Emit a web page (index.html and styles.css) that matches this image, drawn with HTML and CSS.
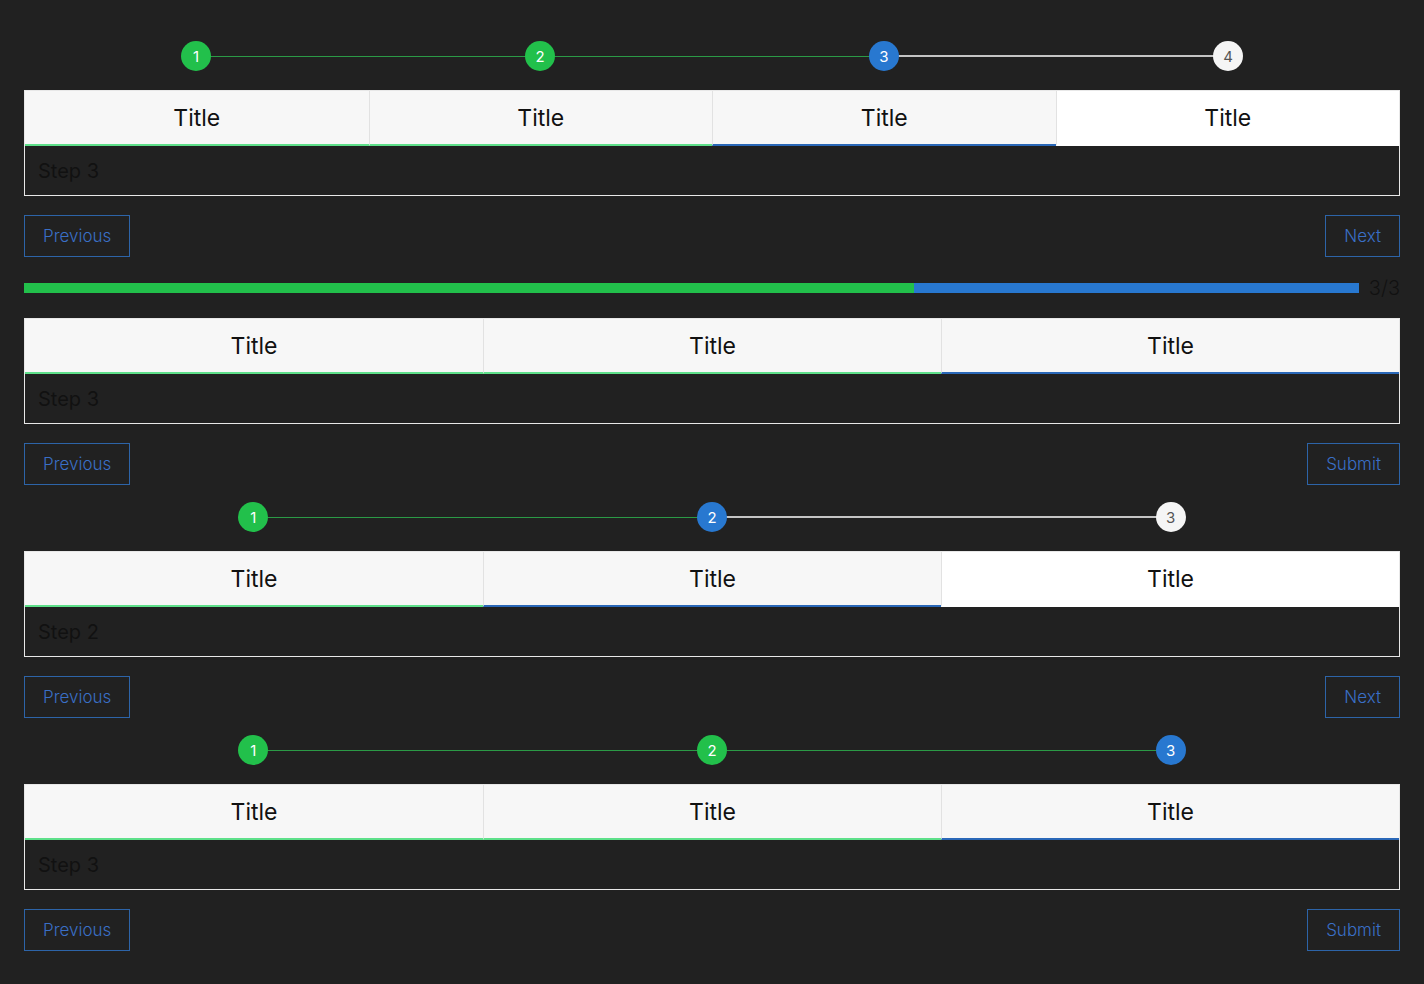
FILE: index.html
```html
<!DOCTYPE html>
<html lang="en">
<head>
<meta charset="utf-8">
<title>Steps</title>
<link rel="stylesheet" href="styles.css">
</head>
<body>
<main class="page">

  <section class="wizard">
    <div class="stepper cols-4">
      <div class="step done first"><span class="line-r"></span><span class="dot">1</span></div>
      <div class="step done"><span class="line-l"></span><span class="line-r"></span><span class="dot">2</span></div>
      <div class="step active"><span class="line-l"></span><span class="line-r off"></span><span class="dot">3</span></div>
      <div class="step todo last"><span class="line-l off"></span><span class="dot">4</span></div>
    </div>
    <div class="card">
      <div class="tabs cols-4">
        <div class="tab done">Title</div>
        <div class="tab done">Title</div>
        <div class="tab active">Title</div>
        <div class="tab todo">Title</div>
      </div>
      <div class="content">Step 3</div>
    </div>
    <div class="actions">
      <button class="btn">Previous</button>
      <button class="btn">Next</button>
    </div>
  </section>

  <section class="wizard">
    <div class="progress">
      <div class="bar">
        <div class="bar-done" style="width:66.667%"></div>
        <div class="bar-active"></div>
      </div>
      <span class="count">3/3</span>
    </div>
    <div class="card">
      <div class="tabs cols-3">
        <div class="tab done">Title</div>
        <div class="tab done">Title</div>
        <div class="tab active">Title</div>
      </div>
      <div class="content">Step 3</div>
    </div>
    <div class="actions">
      <button class="btn">Previous</button>
      <button class="btn">Submit</button>
    </div>
  </section>

  <section class="wizard">
    <div class="stepper cols-3">
      <div class="step done first"><span class="line-r"></span><span class="dot">1</span></div>
      <div class="step active"><span class="line-l"></span><span class="line-r off"></span><span class="dot">2</span></div>
      <div class="step todo last"><span class="line-l off"></span><span class="dot">3</span></div>
    </div>
    <div class="card">
      <div class="tabs cols-3">
        <div class="tab done">Title</div>
        <div class="tab active">Title</div>
        <div class="tab todo">Title</div>
      </div>
      <div class="content">Step 2</div>
    </div>
    <div class="actions">
      <button class="btn">Previous</button>
      <button class="btn">Next</button>
    </div>
  </section>

  <section class="wizard">
    <div class="stepper cols-3">
      <div class="step done first"><span class="line-r"></span><span class="dot">1</span></div>
      <div class="step done"><span class="line-l"></span><span class="line-r"></span><span class="dot">2</span></div>
      <div class="step active last"><span class="line-l"></span><span class="dot">3</span></div>
    </div>
    <div class="card">
      <div class="tabs cols-3">
        <div class="tab done">Title</div>
        <div class="tab done">Title</div>
        <div class="tab active">Title</div>
      </div>
      <div class="content">Step 3</div>
    </div>
    <div class="actions">
      <button class="btn">Previous</button>
      <button class="btn">Submit</button>
    </div>
  </section>

</main>
</body>
</html>
```
FILE: styles.css
```css
* { box-sizing: border-box; }

html, body {
  margin: 0;
  background: #212121;
  font-family: Inter, "Noto Sans", sans-serif;
}

.page {
  padding: 24px 24px 0;
  display: flex;
  flex-direction: column;
}

.wizard {
  display: flex;
  flex-direction: column;
}

.cols-4 { display: grid; grid-template-columns: repeat(4, 1fr); }
.cols-3 { display: grid; grid-template-columns: repeat(3, 1fr); }

/* stepper */
.stepper {
  height: 66px;
  padding-top: 17px;
}

.step {
  position: relative;
  height: 30px;
  display: flex;
  justify-content: center;
}

.line-l, .line-r {
  position: absolute;
  top: 15px;
  height: 1px;
  background: #2b9a46;
}
.line-l { left: 0; right: 50%; }
.line-r { left: 50%; right: 0; }
.line-l.off, .line-r.off { background: #c4c4c4; top: 14px; height: 2px; }

.dot {
  position: relative;
  z-index: 1;
  width: 30px;
  height: 30px;
  border-radius: 50%;
  display: flex;
  align-items: center;
  justify-content: center;
  font-size: 15px;
  color: #fff;
  background: #22c04b;
}
.step.active .dot { background: #2878d0; }
.step.todo .dot { background: #f5f5f5; color: #555; }

/* card */
.card {
  border: 1px solid #e8e8e8;
}

.tabs {
  height: 55px;
}

.tab {
  display: flex;
  align-items: center;
  justify-content: center;
  font-size: 23px;
  color: #111;
  background: #f7f7f7;
  border-left: 1px solid #e2e2e2;
  border-bottom: 2px solid transparent;
}
.tab:first-child { border-left: none; }
.tab.done { border-bottom-color: #5ee08a; }
.tab.active { border-bottom-color: #2a68b8; }
.tab.todo { background: #ffffff; border-bottom-color: #ffffff; }

.content {
  height: 49px;
  padding-left: 13px;
  display: flex;
  align-items: center;
  font-size: 20px;
  color: #111;
}

/* actions */
.actions {
  margin-top: 19px;
  display: flex;
  justify-content: space-between;
}

.btn {
  height: 42px;
  padding: 0 18px;
  background: transparent;
  border: 1px solid #2d64a8;
  color: #3a6fc6;
  font-family: Inter, "Noto Sans", sans-serif;
  font-size: 17px;
  font-weight: 300;
  cursor: pointer;
}

/* progress */
.progress {
  height: 61px;
  display: flex;
  align-items: center;
  gap: 10px;
  padding-top: 1px;
}

.bar {
  flex: 1;
  height: 10px;
  display: flex;
}
.bar-done { background: #22c04b; }
.bar-active { flex: 1; background: #2878d0; }

.count {
  font-size: 20px;
  color: #111;
  font-weight: 300;
}
```
